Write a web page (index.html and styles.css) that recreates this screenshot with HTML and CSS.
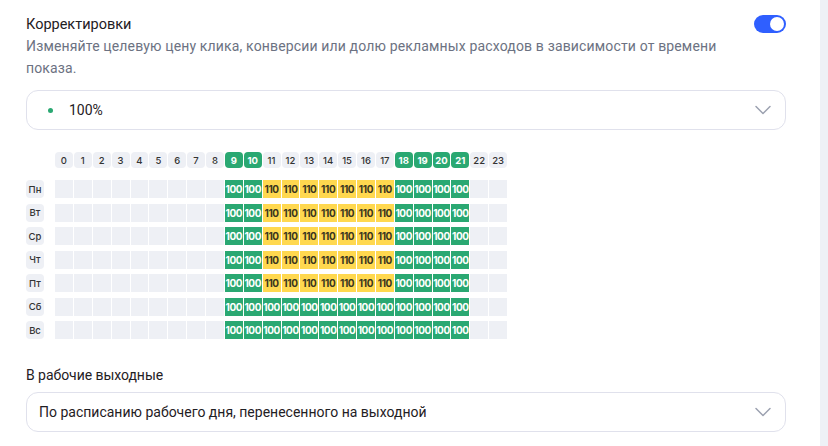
FILE: index.html
```html
<!DOCTYPE html>
<html lang="ru">
<head>
<meta charset="utf-8">
<link rel="stylesheet" href="styles.css">
</head>
<body>
<div class="page">
  <main class="content">
    <div class="head">
      <div class="title">Корректировки</div>
      <div class="toggle"><span class="knob"></span></div>
    </div>
    <p class="desc">Изменяйте целевую цену клика, конверсии или долю рекламных расходов в зависимости от времени показа.</p>
    <div class="select">
      <span class="dot"></span>
      <span class="select-text">100%</span>
      <svg class="chev" width="16" height="10" viewBox="0 0 16 10"><path d="M1 1.5 L8 8.5 L15 1.5" fill="none" stroke="#9ca1b0" stroke-width="1.5" stroke-linecap="round" stroke-linejoin="round"/></svg>
    </div>

    <div class="sched" id="sched"></div>

    <div class="label2">В рабочие выходные</div>
    <div class="select select2">
      <span class="select-text">По расписанию рабочего дня, перенесенного на выходной</span>
      <svg class="chev" width="16" height="10" viewBox="0 0 16 10"><path d="M1 1.5 L8 8.5 L15 1.5" fill="none" stroke="#9ca1b0" stroke-width="1.5" stroke-linecap="round" stroke-linejoin="round"/></svg>
    </div>
  </main>
  <aside class="side"></aside>
</div>
<script src="app.js"></script>
</body>
</html>
```

FILE: styles.css
```css
* { box-sizing: border-box; }
html, body { margin: 0; padding: 0; background: #fff; }
body { font-family: Roboto, "Noto Sans", sans-serif; color: #1f2024; }
.page { display: flex; width: 828px; height: 446px; overflow: hidden; }
.content { width: 820px; padding: 15px 34px 0 26px; }
.side { width: 8px; background: #eef1f6; }

.head { display: flex; justify-content: space-between; align-items: flex-start; }
.title { font-size: 14.5px; line-height: 20px; color: #1f2024; }
.toggle { width: 32px; height: 18px; border-radius: 9px; background: #2f5fff; position: relative; }
.knob { position: absolute; right: 2px; top: 2px; width: 14px; height: 14px; border-radius: 50%; background: #fff; }

.desc { margin: 0; font-size: 14px; letter-spacing: 0.15px; line-height: 22px; color: #6c7282; max-width: 720px; }

.select { margin-top: 11px; height: 40px; border: 1px solid #e0e1ec; border-radius: 12px; display: flex; align-items: center; padding: 0 14px 0 18px; }
.select-text { font-size: 14px; color: #1f2024; flex: 1; }
.dot { width: 5px; height: 5px; border-radius: 50%; background: #2aa872; margin-right: 16px; margin-left: 3px; }
.chev { flex: none; }
.select2 { margin-top: 7px; padding-left: 12px; }

.sched { margin-top: 22px; display: flex; flex-direction: column; gap: 5.5px; font-family: Inter, Roboto, sans-serif; }
.row { display: flex; align-items: stretch; height: 18px; }
.row.hdr { height: 16px; margin-bottom: 6.5px; }
.day { width: 18px; margin-right: 11px; border-radius: 4px; background: #eef0f5; font-size: 9.5px; font-weight: 500; color: #333; display: flex; align-items: center; justify-content: center; }
.day.empty { background: transparent; }
.cells { width: 452px; display: grid; grid-template-columns: repeat(24, 1fr); gap: 1px; }
.h { border-radius: 4px; background: #eef0f5; font-size: 9.5px; font-weight: 500; color: #333; display: flex; align-items: center; justify-content: center; }
.h.on { background: #2aa872; color: #fff; font-weight: 700; }
.c { background: #eef0f5; font-size: 10px; font-weight: 700; letter-spacing: -0.4px; display: flex; align-items: center; justify-content: center; }
.c.g { background: #2aa872; color: #fff; }
.c.y { background: #ffd84f; color: #3a3520; }

.label2 { margin-top: 26px; font-size: 14px; letter-spacing: -0.05px; line-height: 20px; color: #1f2024; }
```

FILE: app.js
```js
(function () {
  var s = document.getElementById('sched');
  var days = ['Пн', 'Вт', 'Ср', 'Чт', 'Пт', 'Сб', 'Вс'];
  var onHours = [9, 10, 18, 19, 20, 21];
  var hdr = '<div class="row hdr"><div class="day empty"></div><div class="cells">';
  for (var h = 0; h < 24; h++) {
    hdr += '<div class="h' + (onHours.indexOf(h) >= 0 ? ' on' : '') + '">' + h + '</div>';
  }
  hdr += '</div></div>';
  var html = hdr;
  days.forEach(function (d, i) {
    var weekend = i >= 5;
    html += '<div class="row"><div class="day">' + d + '</div><div class="cells">';
    for (var h = 0; h < 24; h++) {
      if (h >= 9 && h <= 21) {
        var yellow = !weekend && h >= 11 && h <= 17;
        html += '<div class="c ' + (yellow ? 'y' : 'g') + '">' + (yellow ? '110' : '100') + '</div>';
      } else {
        html += '<div class="c"></div>';
      }
    }
    html += '</div></div>';
  });
  s.innerHTML = html;
})();
```
